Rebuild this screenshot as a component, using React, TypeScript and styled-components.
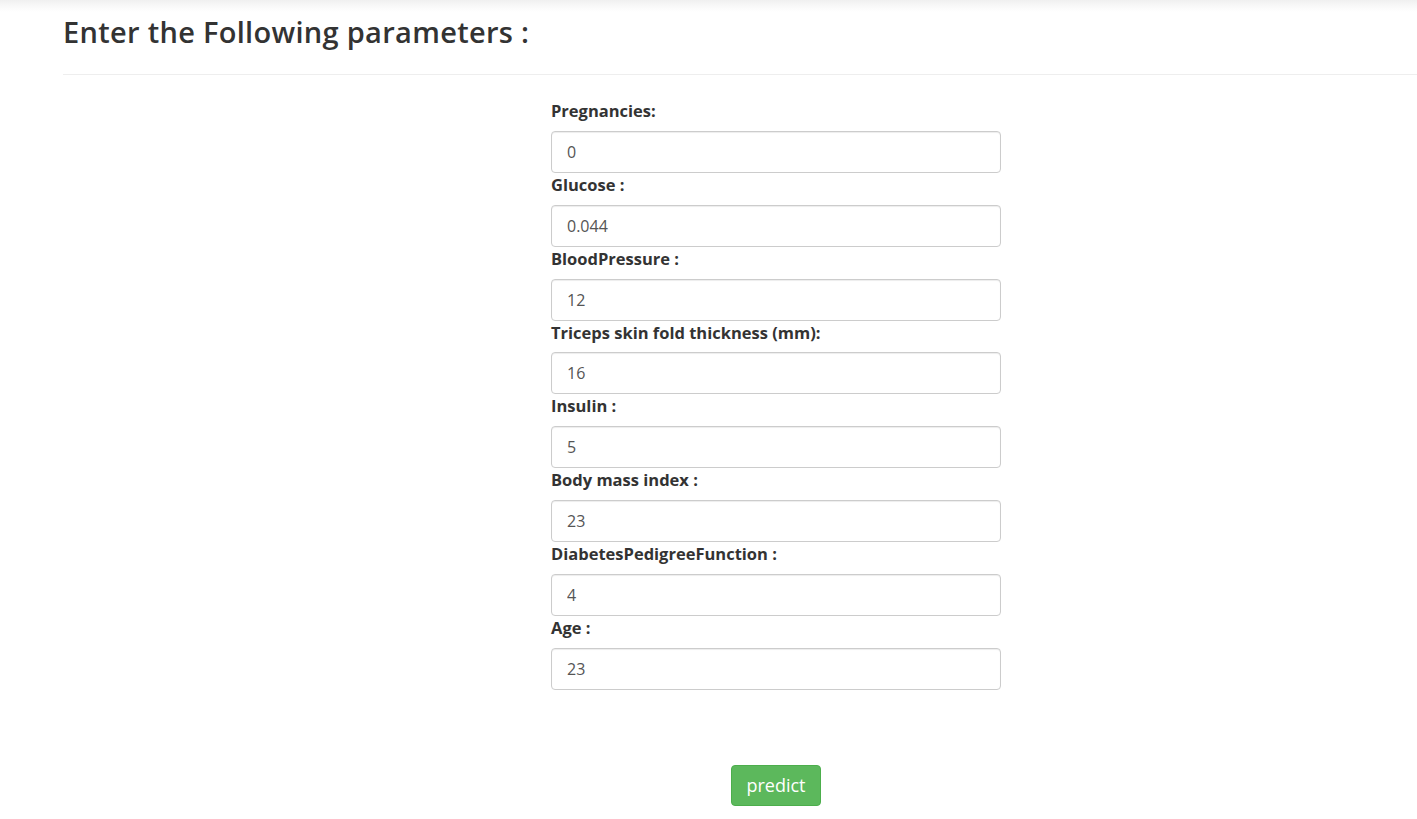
import React from "react";
import styled, { createGlobalStyle } from "styled-components";

const GlobalStyle = createGlobalStyle`
  html, body { margin: 0; padding: 0; background: #fff; }
  body { font-family: "Open Sans", "Liberation Sans", sans-serif; color: #333; }
  * { box-sizing: border-box; }
`;

const TopShade = styled.div`
  height: 12px;
  background: linear-gradient(to bottom, #f0f0f0 0%, #fafafa 60%, #ffffff 100%);
`;

const Header = styled.header`
  margin-left: 63px;
  border-bottom: 1px solid #eeeeee;
  height: 63px;
  padding-top: 2px;
`;

const Title = styled.h2`
  margin: 0;
  font-size: 29px;
  font-weight: 600;
  line-height: 36px;
  letter-spacing: 0.3px;
  color: #333;
`;

const Form = styled.form`
  margin-left: 551px;
  width: 450px;
  padding-top: 26px;
  display: flex;
  flex-direction: column;
`;

const Field = styled.div`
  display: flex;
  flex-direction: column;
  margin-bottom: 2px;
`;

const Label = styled.label`
  font-size: 16.5px;
  font-weight: 700;
  line-height: 19.86px;
  height: 19.86px;
  color: #333;
  margin-bottom: 10px;
`;

const Input = styled.input`
  width: 450px;
  height: 42px;
  padding: 0 15px;
  font-family: inherit;
  font-size: 16px;
  color: #555;
  border: 1px solid #ccc;
  border-radius: 4px;
  box-shadow: inset 0 1px 1px rgba(0, 0, 0, 0.075);
  outline: none;
  background: #fff;
`;

const Actions = styled.div`
  display: flex;
  justify-content: center;
  margin-top: 73px;
`;

const Button = styled.button`
  height: 41px;
  padding: 0 14px;
  font-family: inherit;
  font-size: 18px;
  color: #fff;
  background: #5cb85c;
  border: 1px solid #4cae4c;
  border-radius: 4px;
  cursor: pointer;
`;

const fields: { label: string; value: string }[] = [
  { label: "Pregnancies:", value: "0" },
  { label: "Glucose :", value: "0.044" },
  { label: "BloodPressure :", value: "12" },
  { label: "Triceps skin fold thickness (mm):", value: "16" },
  { label: "Insulin :", value: "5" },
  { label: "Body mass index :", value: "23" },
  { label: "DiabetesPedigreeFunction :", value: "4" },
  { label: "Age :", value: "23" },
];

export default function App() {
  return (
    <>
      <GlobalStyle />
      <TopShade />
      <Header>
        <Title>Enter the Following parameters :</Title>
      </Header>
      <Form onSubmit={(e) => e.preventDefault()}>
        {fields.map((f) => (
          <Field key={f.label}>
            <Label>{f.label}</Label>
            <Input type="text" defaultValue={f.value} />
          </Field>
        ))}
        <Actions>
          <Button type="submit">predict</Button>
        </Actions>
      </Form>
    </>
  );
}
